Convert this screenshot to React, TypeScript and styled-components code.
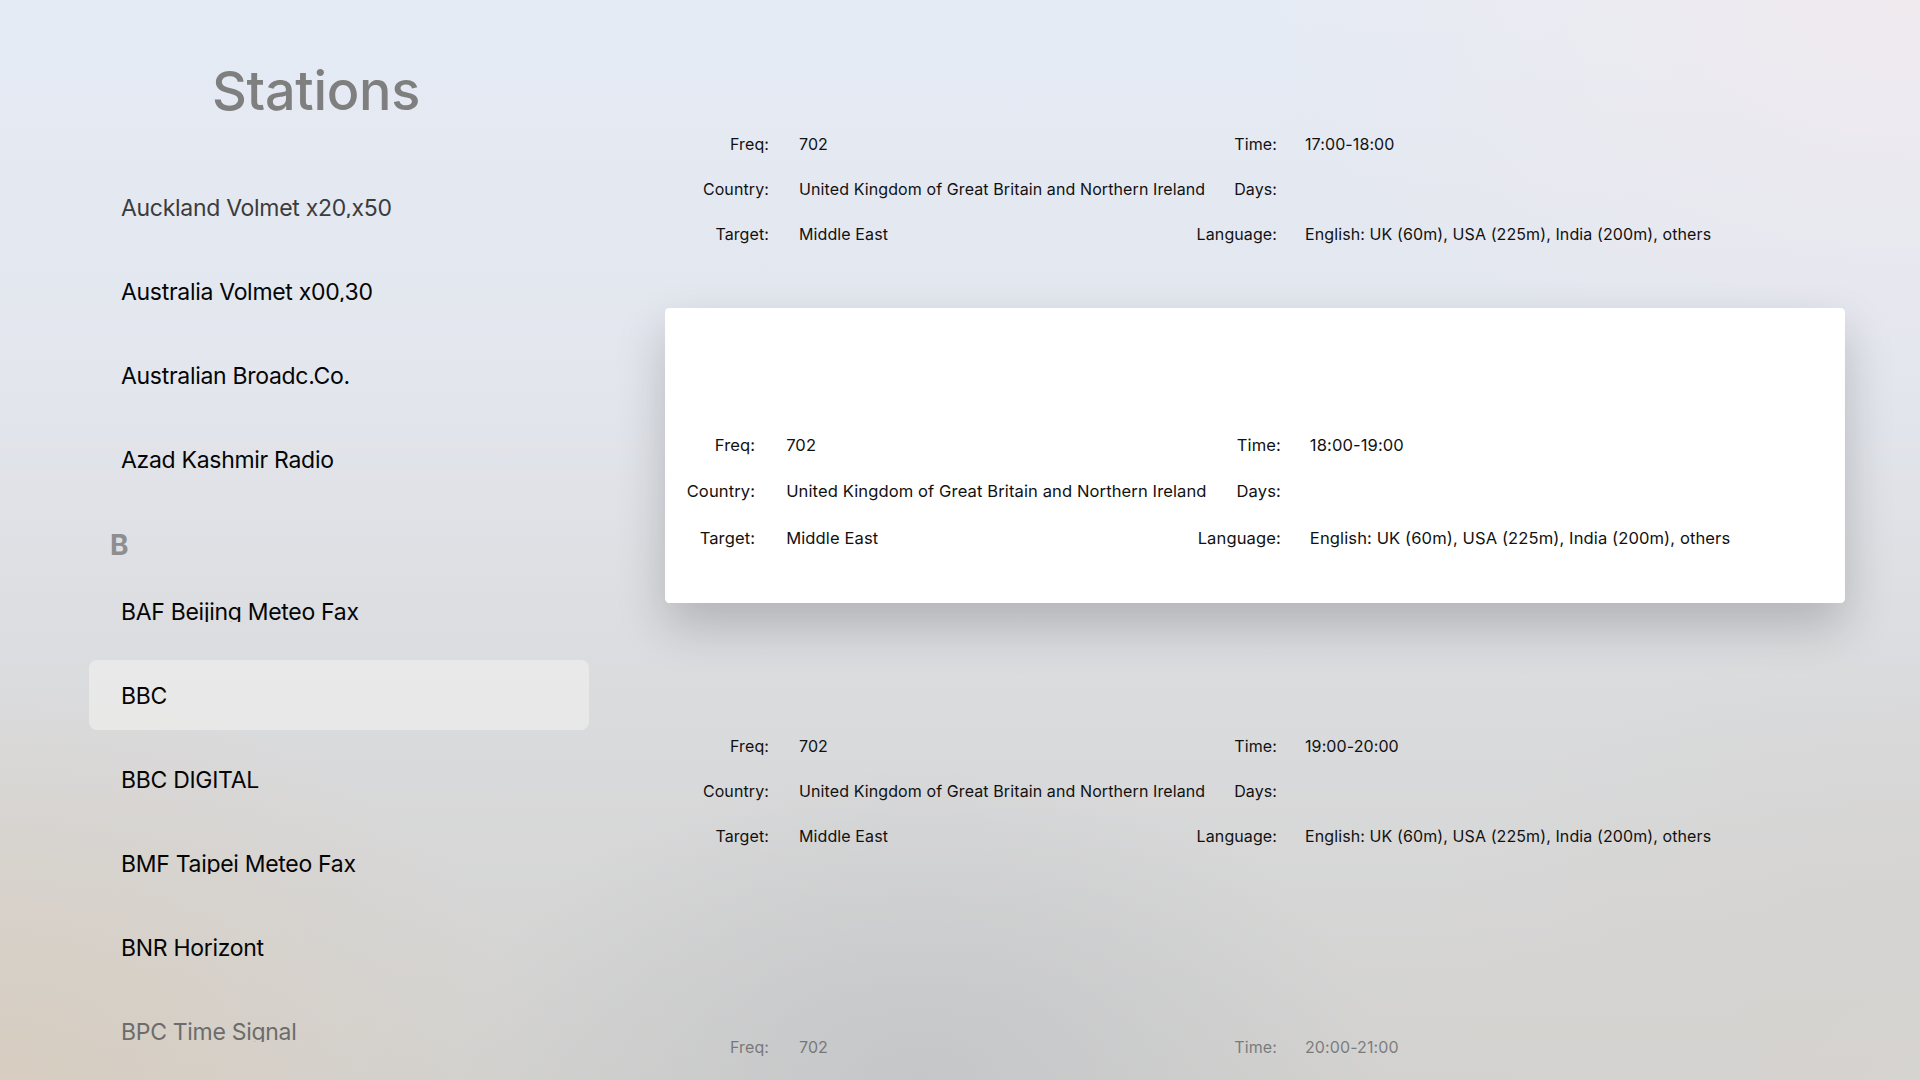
import React from 'react';
import styled, { createGlobalStyle } from 'styled-components';

const GlobalStyle = createGlobalStyle`
  html, body {
    margin: 0;
    padding: 0;
    width: 1920px;
    height: 1080px;
    overflow: hidden;
    font-family: Inter, "Noto Sans", "DejaVu Sans", sans-serif;
  }
`;

const Screen = styled.div`
  width: 1920px;
  height: 1080px;
  display: flex;
  overflow: hidden;
  background:
    radial-gradient(ellipse 720px 520px at 0% 100%, rgba(216, 205, 191, 0.9), rgba(216, 205, 191, 0) 75%),
    radial-gradient(ellipse 620px 420px at 48% 100%, rgba(194, 196, 199, 0.85), rgba(194, 196, 199, 0) 75%),
    radial-gradient(ellipse 900px 520px at 100% 0%, rgba(241, 234, 239, 0.95), rgba(241, 234, 239, 0) 75%),
    radial-gradient(ellipse 700px 600px at 100% 100%, rgba(214, 211, 208, 0.9), rgba(214, 211, 208, 0) 75%),
    linear-gradient(180deg, #e5ebf5 0%, #e3e6ed 35%, #dadbdd 65%, #d3d2d0 100%);
`;

const Sidebar = styled.aside`
  width: 665px;
  flex-shrink: 0;
  display: flex;
  flex-direction: column;
`;

const Title = styled.h1`
  width: 632px;
  margin: 56px 0 0;
  height: 70px;
  line-height: 70px;
  text-align: center;
  font-size: 54px;
  font-weight: 500;
  color: #7f7f7f;
  letter-spacing: -0.3px;
`;

const List = styled.ul`
  list-style: none;
  margin: 46px 0 0 89px;
  padding: 0;
  width: 500px;
  display: flex;
  flex-direction: column;
  gap: 14px;
`;

const Row = styled.li<{ $selected?: boolean }>`
  height: 70px;
  padding-left: 32px;
  display: flex;
  align-items: center;
  border-radius: 8px;
  background: ${p => (p.$selected ? 'rgba(238, 238, 236, 0.7)' : 'transparent')};
`;

// descenders are cut at the baseline, as on the device
const ItemText = styled.span<{ $tone?: string }>`
  display: block;
  height: 22px;
  line-height: 24px;
  overflow: hidden;
  font-size: 23px;
  letter-spacing: -0.3px;
  color: ${p => p.$tone || '#050505'};
`;

const SectionHeader = styled.li`
  height: 54px;
  padding-left: 21px;
  display: flex;
  align-items: flex-end;
  font-size: 28px;
  line-height: 34px;
  font-weight: 700;
  color: #8e8e8e;
`;

const Content = styled.main`
  padding: 12px 0 0 20px;
  display: flex;
  flex-direction: column;
  gap: 16px;
`;

const Panel = styled.section<{ $focused?: boolean; $faded?: boolean }>`
  width: 1140px;
  height: 285px;
  box-sizing: border-box;
  padding: 109px 0 0 ${p => (p.$focused ? 3 : 0)}px;
  flex-shrink: 0;
  border-radius: 4px;
  position: relative;
  z-index: ${p => (p.$focused ? 1 : 0)};
  background: ${p => (p.$focused ? '#ffffff' : 'transparent')};
  transform: ${p => (p.$focused ? 'scale(1.035)' : 'none')};
  box-shadow: ${p => (p.$focused ? '0 22px 48px rgba(0, 0, 0, 0.2)' : 'none')};
  opacity: ${p => (p.$faded ? 0.45 : 1)};
`;

const DetailGrid = styled.div`
  display: grid;
  grid-template-columns: 114px 376px 130px 1fr;
  grid-auto-rows: 45px;
  align-items: center;
  font-size: 16px;
  letter-spacing: 0.1px;
  color: #111;
  white-space: nowrap;
`;

const Label = styled.span<{ $pad: number }>`
  text-align: right;
  padding-right: ${p => p.$pad}px;
`;

const Value = styled.span``;

type Station = { name: string; tone?: string; selected?: boolean };
type Section = { letter?: string; items: Station[] };

const sections: Section[] = [
  {
    items: [
      { name: 'Auckland Volmet x20,x50', tone: '#3c3c3c' },
      { name: 'Australia Volmet x00,30' },
      { name: 'Australian Broadc.Co.' },
      { name: 'Azad Kashmir Radio' },
    ],
  },
  {
    letter: 'B',
    items: [
      { name: 'BAF Beijing Meteo Fax' },
      { name: 'BBC', selected: true },
      { name: 'BBC DIGITAL' },
      { name: 'BMF Taipei Meteo Fax' },
      { name: 'BNR Horizont' },
      { name: 'BPC Time Signal', tone: '#6c6c6c' },
    ],
  },
];

const schedule = ['17:00-18:00', '18:00-19:00', '19:00-20:00', '20:00-21:00'];

const Broadcast = ({ time, focused, faded }: { time: string; focused?: boolean; faded?: boolean }) => (
  <Panel $focused={focused} $faded={faded}>
    <DetailGrid>
      <Label $pad={30}>Freq:</Label>
      <Value>702</Value>
      <Label $pad={28}>Time:</Label>
      <Value>{time}</Value>

      <Label $pad={30}>Country:</Label>
      <Value>United Kingdom of Great Britain and Northern Ireland</Value>
      <Label $pad={28}>Days:</Label>
      <Value />

      <Label $pad={30}>Target:</Label>
      <Value>Middle East</Value>
      <Label $pad={28}>Language:</Label>
      <Value>English: UK (60m), USA (225m), India (200m), others</Value>
    </DetailGrid>
  </Panel>
);

export default function App() {
  return (
    <>
      <GlobalStyle />
      <Screen>
        <Sidebar>
          <Title>Stations</Title>
          <List>
            {sections.map((section, si) => (
              <React.Fragment key={si}>
                {section.letter && <SectionHeader>{section.letter}</SectionHeader>}
                {section.items.map(item => (
                  <Row key={item.name} $selected={item.selected}>
                    <ItemText $tone={item.tone}>{item.name}</ItemText>
                  </Row>
                ))}
              </React.Fragment>
            ))}
          </List>
        </Sidebar>
        <Content>
          {schedule.map((time, i) => (
            <Broadcast key={time} time={time} focused={i === 1} faded={i === 3} />
          ))}
        </Content>
      </Screen>
    </>
  );
}
